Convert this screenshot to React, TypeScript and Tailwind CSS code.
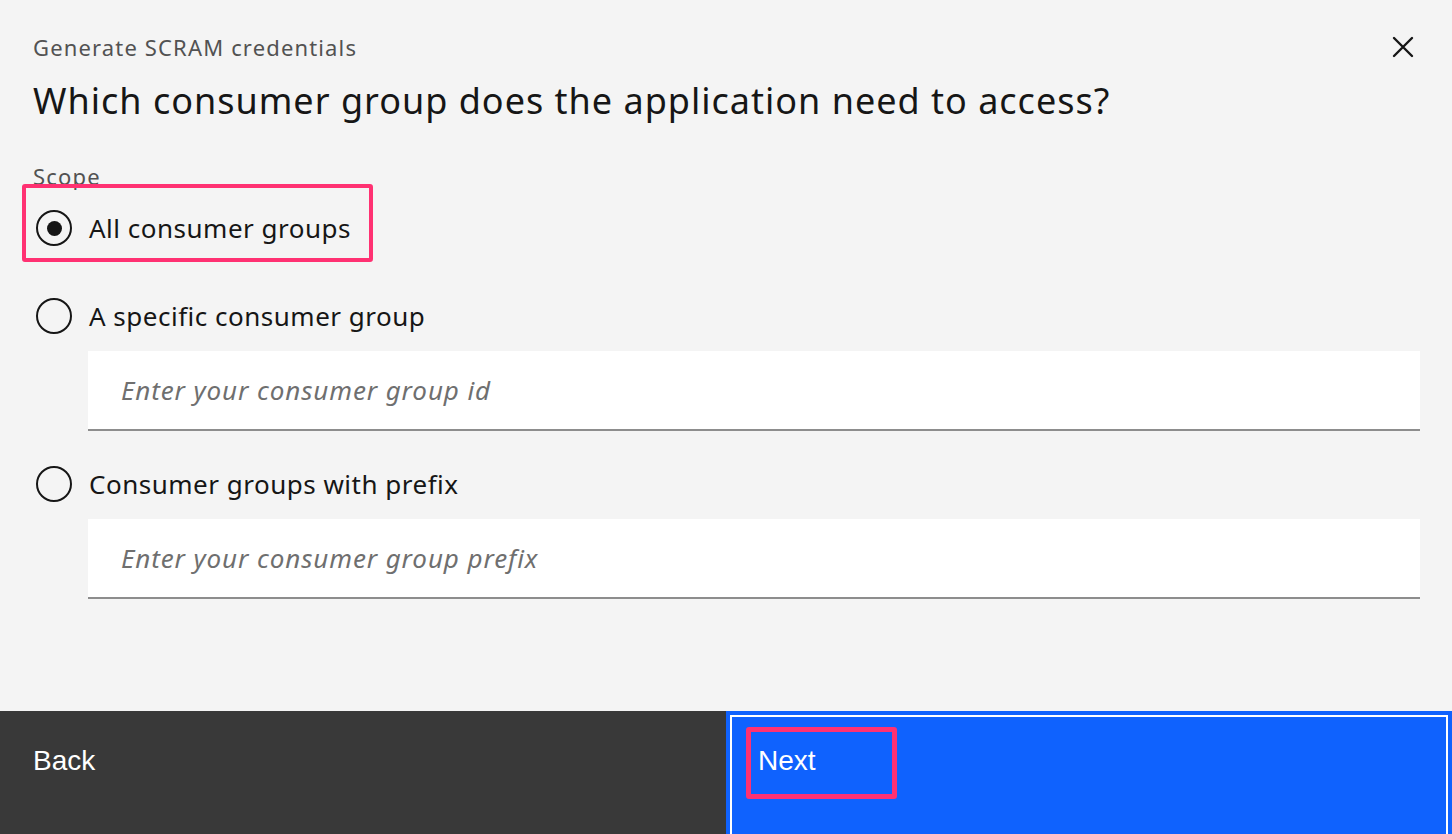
const plex = "font-['Noto_Sans',sans-serif]"

function Radio({ checked, label }: { checked?: boolean; label: string }) {
  return (
    <label className="flex h-[48px] items-center">
      <span className="ml-[3px] flex h-[36px] w-[36px] items-center justify-center rounded-full border-2 border-[#161616]">
        {checked && <span className="h-[15px] w-[15px] rounded-full bg-[#161616]" />}
      </span>
      <span className="ml-[17px] text-[26px] leading-[32px] tracking-[0.5px] text-[#161616]">{label}</span>
    </label>
  )
}

function TextInput({ placeholder }: { placeholder: string }) {
  return (
    <div className="ml-[55px] flex h-[80px] items-center border-b-2 border-[#8d8d8d] bg-white px-[33px]">
      <span className="text-[26px] italic tracking-[0.9px] text-[#6f6f6f]">{placeholder}</span>
    </div>
  )
}

export default function App() {
  return (
    <div className={`relative flex h-[834px] w-full flex-col overflow-hidden bg-[#f4f4f4] ${plex}`}>
      <div className="flex-1 pl-[33px] pr-[32px]">
        <div className="flex items-center justify-between pt-[33px]">
          <p className="text-[22px] leading-[28px] tracking-[1.15px] text-[#525252]">Generate SCRAM credentials</p>
          <button className="mr-[6px] text-[#161616]" aria-label="Close">
            <svg width="22" height="22" viewBox="0 0 22 22" fill="none" stroke="currentColor" strokeWidth="2.4" strokeLinecap="round">
              <path d="M2 2L20 20M20 2L2 20" />
            </svg>
          </button>
        </div>
        <h1 className="mt-[18px] text-[36px] leading-[44px] tracking-[1px] text-[#161616]">
          Which consumer group does the application need to access?
        </h1>

        <p className="mt-[39px] text-[22px] leading-[28px] tracking-[1.2px] text-[#525252]">Scope</p>
        <div className="mt-[14px]">
          <Radio checked label="All consumer groups" />
        </div>
        <div className="mt-[40px]">
          <Radio label="A specific consumer group" />
        </div>
        <div className="mt-[11px]">
          <TextInput placeholder="Enter your consumer group id" />
        </div>
        <div className="mt-[29px]">
          <Radio label="Consumer groups with prefix" />
        </div>
        <div className="mt-[11px]">
          <TextInput placeholder="Enter your consumer group prefix" />
        </div>
      </div>

      <div className="flex h-[123px] shrink-0 font-['Liberation_Sans',sans-serif] text-[28px] text-white">
        <div className="flex w-1/2 bg-[#393939] pl-[33px] pt-[29px]">Back</div>
        <div className="w-1/2 bg-[#0f62fe] px-[4px] pt-[4px]">
          <div className="h-[128px] border-2 border-white pl-[26px] pt-[23px]">Next</div>
        </div>
      </div>

      {/* annotation boxes */}
      <div className="pointer-events-none absolute left-[22px] top-[184px] h-[78px] w-[351px] rounded-[3px] border-[4px] border-[#ff3172]" />
      <div className="pointer-events-none absolute left-[746px] top-[727px] h-[72px] w-[151px] rounded-[3px] border-[5px] border-[#ff3172]" />
    </div>
  )
}
